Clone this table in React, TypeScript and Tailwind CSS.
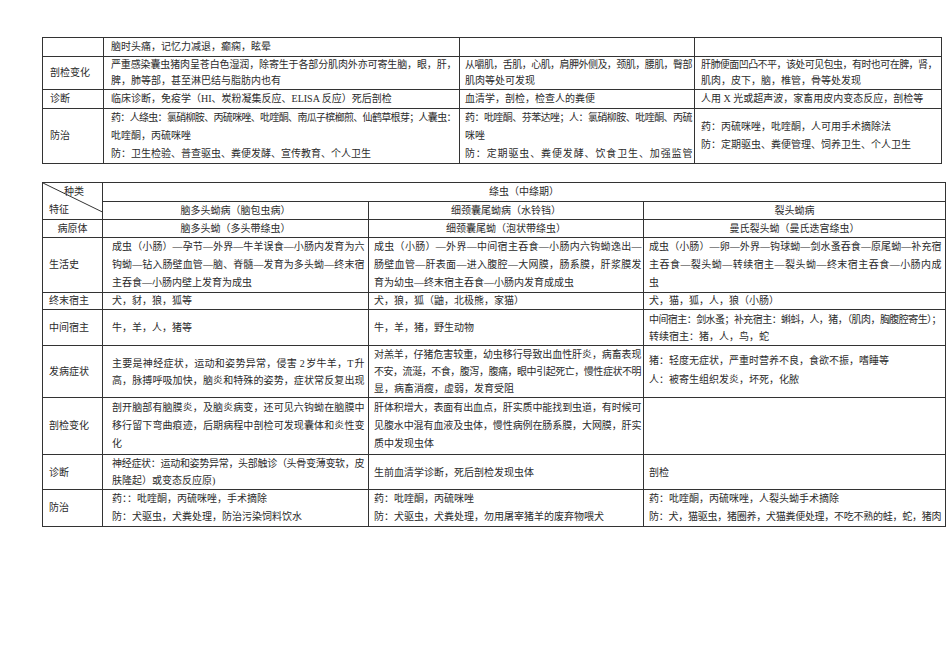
import type { ReactNode } from 'react';

const B = 'border border-[#333] p-0';

// one full line, stretched to the cell width like the Word original
function J({ children }: { children: ReactNode }) {
  return <div className="text-justify [text-align-last:justify] tracking-[-1.5px]">{children}</div>;
}

function L({ children }: { children: ReactNode }) {
  return <div>{children}</div>;
}

function TopTable() {
  const lab = `${B} pl-[7px] text-left`;
  const c2 = `${B} pl-[7px] pr-[4px]`;
  const c3 = `${B} pl-[5px] pr-[3px]`;
  const c4 = `${B} pl-[6px] pr-[5px]`;

  return (
    <table className="table-fixed border-collapse w-[899px]">
      <colgroup>
        <col className="w-[61px]" />
        <col className="w-[356px]" />
        <col className="w-[235px]" />
        <col className="w-[247px]" />
      </colgroup>
      <tbody>
        <tr className="h-[18px] leading-[18px]">
          <td className={lab}></td>
          <td className={c2}>脑时头痛，记忆力减退，癫痫，眩晕</td>
          <td className={c3}></td>
          <td className={c4}></td>
        </tr>
        <tr className="h-[33px] leading-[16px]">
          <td className={lab}>剖检变化</td>
          <td className={c2}>
            <J>严重感染囊虫猪肉呈苍白色湿润，除寄生于各部分肌肉外亦可寄生脑，眼，肝，</J>
            <L>脾，肺等部，甚至淋巴结与脂肪内也有</L>
          </td>
          <td className={c3}>
            <J>从嚼肌，舌肌，心肌，肩胛外侧及，颈肌，腰肌，臀部</J>
            <L>肌肉等处可发现</L>
          </td>
          <td className={c4}>
            <J>肝肺便面凹凸不平，该处可见包虫，有时也可在脾，肾，</J>
            <L>肌肉，皮下，脑，椎管，骨等处发现</L>
          </td>
        </tr>
        <tr className="h-[19px] leading-[18px]">
          <td className={lab}>诊断</td>
          <td className={c2}>临床诊断，免疫学（HI、炭粉凝集反应、ELISA 反应）死后剖检</td>
          <td className={c3}>血清学，剖检，检查人的粪便</td>
          <td className={c4}>人用 X 光或超声波，家畜用皮内变态反应，剖检等</td>
        </tr>
        <tr className="h-[55px] leading-[18px]">
          <td className={lab}>防治</td>
          <td className={c2}>
            <J>药：人绦虫：氯硝柳胺、丙硫咪唑、吡喹酮、南瓜子槟榔煎、仙鹤草根芽；人囊虫：</J>
            <L>吡喹酮，丙硫咪唑</L>
            <L>防：卫生检验、普查驱虫、粪便发酵、宣传教育、个人卫生</L>
          </td>
          <td className={c3}>
            <J>药：吡喹酮、芬苯达唑；人：氯硝柳胺、吡喹酮、丙硫</J>
            <L>咪唑</L>
            <J>防：定期驱虫、粪便发酵、饮食卫生、加强监管</J>
          </td>
          <td className={c4}>
            <L>药：丙硫咪唑，吡喹酮，人可用手术摘除法</L>
            <L>防：定期驱虫、粪便管理、饲养卫生、个人卫生</L>
          </td>
        </tr>
      </tbody>
    </table>
  );
}

function BottomTable() {
  const lab = `${B} pl-[6px] text-left`;
  const c2 = `${B} pl-[9px] pr-[5px]`;
  const c3 = `${B} pl-[5px] pr-[3px]`;
  const c4 = `${B} pl-[5px] pr-[5px]`;

  return (
    <table className="table-fixed border-collapse w-[903px]">
      <colgroup>
        <col className="w-[60px]" />
        <col className="w-[266px]" />
        <col className="w-[275px]" />
        <col className="w-[302px]" />
      </colgroup>
      <tbody>
        <tr className="h-[19px] leading-[18px]">
          <td rowSpan={2} className={`${B} relative`}>
            <svg className="absolute inset-0 h-full w-full" preserveAspectRatio="none" viewBox="0 0 100 100">
              <line x1="0" y1="0" x2="100" y2="80" stroke="#333" strokeWidth="1" vectorEffect="non-scaling-stroke" />
            </svg>
            <div className="relative pl-[21px] leading-[17px]">种类</div>
            <div className="relative pl-[6px] leading-[19px]">特征</div>
          </td>
          <td colSpan={3} className={`${B} text-center`}>绦虫（中绦期）</td>
        </tr>
        <tr className="h-[18px] leading-[17px] text-center">
          <td className={B}>脑多头蚴病（脑包虫病）</td>
          <td className={B}>细颈囊尾蚴病（水铃铛）</td>
          <td className={B}>裂头蚴病</td>
        </tr>
        <tr className="h-[18px] leading-[17px] text-center">
          <td className={`${B} text-center`}>病原体</td>
          <td className={B}>脑多头蚴（多头带绦虫）</td>
          <td className={B}>细颈囊尾蚴（泡状带绦虫）</td>
          <td className={B}>曼氏裂头蚴（曼氏迭宫绦虫）</td>
        </tr>
        <tr className="h-[55px] leading-[18px]">
          <td className={lab}>生活史</td>
          <td className={c2}>
            <J>成虫（小肠）—孕节—外界—牛羊误食—小肠内发育为六</J>
            <J>钩蚴—钻入肠壁血管—脑、脊髓—发育为多头蚴—终末宿</J>
            <L>主吞食—小肠内壁上发育为成虫</L>
          </td>
          <td className={c3}>
            <J>成虫（小肠）—外界—中间宿主吞食—小肠内六钩蚴逸出—</J>
            <J>肠壁血管—肝表面—进入腹腔—大网膜，肠系膜，肝浆膜发</J>
            <L>育为幼虫—终末宿主吞食—小肠内发育成成虫</L>
          </td>
          <td className={c4}>
            <J>成虫（小肠）—卵—外界—钩球蚴—剑水蚤吞食—原尾蚴—补充宿</J>
            <J>主吞食—裂头蚴—转续宿主—裂头蚴—终末宿主吞食—小肠内成</J>
            <L>虫</L>
          </td>
        </tr>
        <tr className="h-[17px] leading-[16px]">
          <td className={lab}>终末宿主</td>
          <td className={c2}>犬，豺，狼，狐等</td>
          <td className={c3}>犬，狼，狐（鼬，北极熊，家猫）</td>
          <td className={c4}>犬，猫，狐，人，狼（小肠）</td>
        </tr>
        <tr className="h-[36px] leading-[17px]">
          <td className={lab}>中间宿主</td>
          <td className={c2}>牛，羊，人，猪等</td>
          <td className={c3}>牛，羊，猪，野生动物</td>
          <td className={c4}>
            <J>中间宿主：剑水蚤；补充宿主：蝌蚪，人，猪，（肌肉，胸腹腔寄生）；</J>
            <L>转续宿主：猪，人，鸟，蛇</L>
          </td>
        </tr>
        <tr className="h-[52px] leading-[17px]">
          <td className={lab}>发病症状</td>
          <td className={c2}>
            <J>主要是神经症状，运动和姿势异常，侵害 2 岁牛羊，T 升</J>
            <J>高，脉搏呼吸加快，脑炎和特殊的姿势，症状常反复出现</J>
          </td>
          <td className={c3}>
            <J>对羔羊，仔猪危害较重，幼虫移行导致出血性肝炎，病畜表现</J>
            <J>不安，流涎，不食，腹泻，腹痛，眼中引起死亡，慢性症状不明</J>
            <L>显，病畜消瘦，虚弱，发育受阻</L>
          </td>
          <td className={`${c4} leading-[19px] pb-[4px]`}>
            <L>猪：轻度无症状，严重时营养不良，食欲不振，嗜睡等</L>
            <L>人：被寄生组织发炎，坏死，化脓</L>
          </td>
        </tr>
        <tr className="h-[57px] leading-[18px]">
          <td className={lab}>剖检变化</td>
          <td className={c2}>
            <J>剖开脑部有脑膜炎，及脑炎病变，还可见六钩蚴在脑膜中</J>
            <J>移行留下弯曲痕迹，后期病程中剖检可发现囊体和炎性变</J>
            <L>化</L>
          </td>
          <td className={c3}>
            <J>肝体积增大，表面有出血点，肝实质中能找到虫道，有时候可</J>
            <J>见腹水中混有血液及虫体，慢性病例在肠系膜，大网膜，肝实</J>
            <L>质中发现虫体</L>
          </td>
          <td className={c4}></td>
        </tr>
        <tr className="h-[35px] leading-[17px]">
          <td className={lab}>诊断</td>
          <td className={c2}>
            <J>神经症状：运动和姿势异常，头部触诊（头骨变薄变软，皮</J>
            <L>肤隆起）或变态反应原)</L>
          </td>
          <td className={c3}>生前血清学诊断，死后剖检发现虫体</td>
          <td className={c4}>剖检</td>
        </tr>
        <tr className="h-[37px] leading-[18px]">
          <td className={lab}>防治</td>
          <td className={c2}>
            <L>药：：吡喹酮，丙硫咪唑，手术摘除</L>
            <L>防：犬驱虫，犬粪处理，防治污染饲料饮水</L>
          </td>
          <td className={c3}>
            <L>药：吡喹酮，丙硫咪唑</L>
            <L>防：犬驱虫，犬粪处理，勿用屠宰猪羊的废弃物喂犬</L>
          </td>
          <td className={c4}>
            <L>药：吡喹酮，丙硫咪唑，人裂头蚴手术摘除</L>
            <J>防：犬，猫驱虫，猪圈养，犬猫粪便处理，不吃不熟的蛙，蛇，猪肉</J>
          </td>
        </tr>
      </tbody>
    </table>
  );
}

export default function App() {
  return (
    <div
      lang="zh-CN"
      className="min-h-[672px] bg-white pt-[37px] pl-[42px] text-[10px] text-[#2b2b2b] font-['Liberation_Serif','Noto_Sans_CJK_SC',serif]"
    >
      <TopTable />
      <div className="h-[18px]" />
      <BottomTable />
    </div>
  );
}
